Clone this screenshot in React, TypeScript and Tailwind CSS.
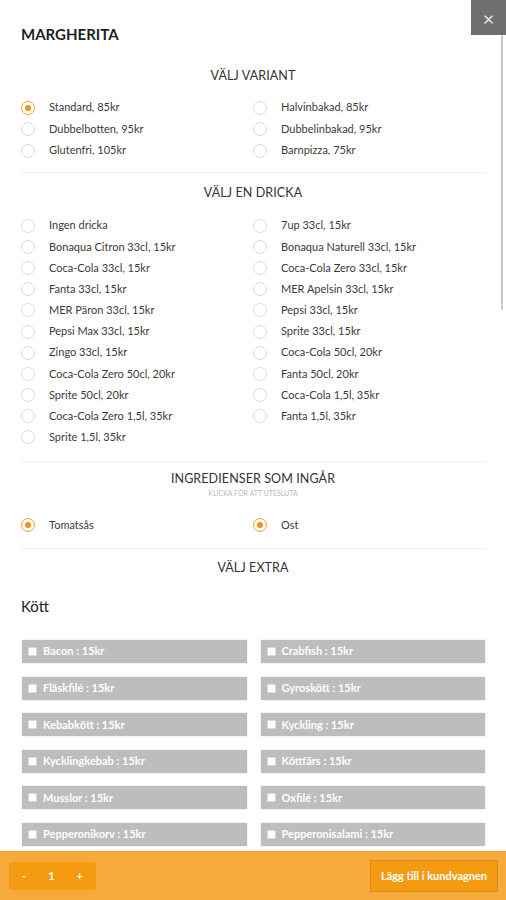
import React from "react";

const VARIANTS = [
  ["Standard, 85kr", "Halvinbakad, 85kr"],
  ["Dubbelbotten, 95kr", "Dubbelinbakad, 95kr"],
  ["Glutenfri, 105kr", "Barnpizza, 75kr"],
];

const DRINKS = [
  "Ingen dricka",
  "7up 33cl, 15kr",
  "Bonaqua Citron 33cl, 15kr",
  "Bonaqua Naturell 33cl, 15kr",
  "Coca-Cola 33cl, 15kr",
  "Coca-Cola Zero 33cl, 15kr",
  "Fanta 33cl, 15kr",
  "MER Apelsin 33cl, 15kr",
  "MER Päron 33cl, 15kr",
  "Pepsi 33cl, 15kr",
  "Pepsi Max 33cl, 15kr",
  "Sprite 33cl, 15kr",
  "Zingo 33cl, 15kr",
  "Coca-Cola 50cl, 20kr",
  "Coca-Cola Zero 50cl, 20kr",
  "Fanta 50cl, 20kr",
  "Sprite 50cl, 20kr",
  "Coca-Cola 1,5l, 35kr",
  "Coca-Cola Zero 1,5l, 35kr",
  "Fanta 1,5l, 35kr",
  "Sprite 1,5l, 35kr",
];

// only the rows visible above the footer
const MEAT = [
  "Bacon",
  "Crabfish",
  "Fläskfilé",
  "Gyroskött",
  "Kebabkött",
  "Kyckling",
  "Kycklingkebab",
  "Köttfärs",
  "Musslor",
  "Oxfilé",
  "Pepperonikorv",
  "Pepperonisalami",
];

function Radio({ label, checked, rowClass }: { label: string; checked?: boolean; rowClass: string }) {
  return (
    <div className={`flex items-center ${rowClass}`}>
      <span
        className={`flex h-[14px] w-[14px] shrink-0 items-center justify-center rounded-full border ${
          checked ? "border-[#f5a02a]" : "border-[#dcdcdc]"
        }`}
      >
        {checked && <span className="h-[6px] w-[6px] rounded-full bg-[#f39214]" />}
      </span>
      <span className="ml-[14px] text-[11px] text-[#3a3a3a]">{label}</span>
    </div>
  );
}

function Heading({ children }: { children: React.ReactNode }) {
  return <div className="text-center text-[12.5px] tracking-[0.1px] text-[#333]">{children}</div>;
}

export default function App() {
  return (
    <div
      className="relative flex h-[900px] w-[506px] flex-col overflow-hidden bg-white"
      style={{ fontFamily: "Lato, 'Open Sans', sans-serif" }}
    >
      <div className="flex-1 overflow-hidden px-[21px]">
        <div className="pt-[25px] text-[15px] font-bold leading-[18px] text-[#1e1e1e]">MARGHERITA</div>

        <div className="pt-[24px]">
          <Heading>VÄLJ VARIANT</Heading>
        </div>
        <div className="grid grid-cols-2 pt-[11px]">
          {VARIANTS.flat().map((v, i) => (
            <Radio key={v} label={v} checked={i === 0} rowClass="h-[21.5px]" />
          ))}
        </div>

        <div className="mt-[11px] border-t border-[#eeeeee]" />
        <div className="pt-[11px]">
          <Heading>VÄLJ EN DRICKA</Heading>
        </div>
        <div className="grid grid-cols-2 pt-[12px]">
          {DRINKS.map((d) => (
            <Radio key={d} label={d} rowClass="h-[21.2px]" />
          ))}
        </div>

        <div className="mt-[13px] border-t border-[#eeeeee]" />
        <div className="pt-[8px]">
          <Heading>INGREDIENSER SOM INGÅR</Heading>
          <div className="mt-[-1px] text-center text-[7px] text-[#b9b9b9]">KLICKA FÖR ATT UTESLUTA</div>
        </div>
        <div className="grid grid-cols-2 pt-[16px]">
          <Radio label="Tomatsås" checked rowClass="h-[21px]" />
          <Radio label="Ost" checked rowClass="h-[21px]" />
        </div>

        <div className="mt-[13px] border-t border-[#eeeeee]" />
        <div className="pt-[10px]">
          <Heading>VÄLJ EXTRA</Heading>
        </div>
        <div className="pt-[19px] text-[15px] leading-[18px] text-[#222]">Kött</div>

        <div className="grid grid-cols-2 gap-x-[14px] gap-y-[13.6px] pl-[1px] pt-[25px]">
          {MEAT.map((m) => (
            <div
              key={m}
              className="flex h-[23px] items-center bg-[#bdbdbd] pl-[6px] shadow-[0_0_1px_rgba(0,0,0,0.25)]"
            >
              <span className="h-[9px] w-[9px] rounded-[1px] border border-[#d8d8d8] bg-white" />
              <span className="ml-[6px] text-[11px] font-bold text-white">{m} : 15kr</span>
            </div>
          ))}
        </div>
      </div>

      <div className="flex h-[49px] shrink-0 items-center justify-between border-t border-[#f2a124] bg-[#f6aa3c] pl-[9px] pr-[8px]">
        <div className="flex h-[28px] w-[87px] items-center justify-between rounded-[2px] bg-[#f49b12] px-[13px] text-[11px] font-bold leading-[14px] text-white">
          <span>-</span>
          <span>1</span>
          <span>+</span>
        </div>
        <button className="flex h-[32px] w-[128px] items-center justify-center border border-[#d98b18] bg-[#f49b12] text-[11px] font-bold leading-[14px] text-white">
          Lägg till i kundvagnen
        </button>
      </div>

      <div className="absolute right-0 top-0 flex h-[35px] w-[35px] items-center justify-center bg-[#6f6f6f] text-[20px] leading-none text-[#e8e8e8]">
        ×
      </div>
      <div className="absolute right-[3px] top-[35px] h-[275px] w-[2px] rounded-full bg-[#c9c9c9]" />
    </div>
  );
}
